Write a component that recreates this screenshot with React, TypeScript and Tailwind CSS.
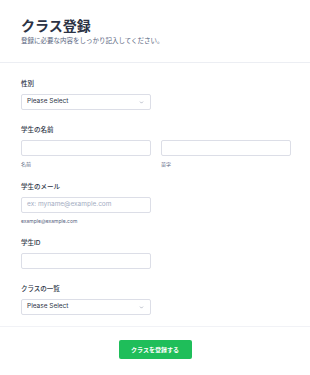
import { ChevronDown } from "lucide-react";

const font = { fontFamily: 'Inter, "Noto Sans CJK JP", sans-serif' };

function Label({ children }: { children: React.ReactNode }) {
  return (
    <div className="h-[10px] mb-[5px] text-[6.5px] leading-[10px] font-medium text-[#2c3345]">{children}</div>
  );
}

function Select() {
  return (
    <div className="w-[130px] h-[16px] border border-[#dcdee7] rounded-[2px] bg-white flex items-center justify-between pl-[5px] pr-[6px]">
      <span className="text-[6.5px] text-[#2c3345]">Please Select</span>
      <ChevronDown className="w-[5px] h-[5px] text-[#7d879c]" strokeWidth={2.5} />
    </div>
  );
}

function Input({ placeholder, wide }: { placeholder?: string; wide?: boolean }) {
  return (
    <div
      className={
        (wide ? "flex-1" : "w-[130px]") +
        " h-[16px] border border-[#dcdee7] rounded-[2px] bg-white flex items-center px-[5px]"
      }
    >
      {placeholder && <span className="text-[6.5px] text-[#a3acc2]">{placeholder}</span>}
    </div>
  );
}

function Sub({ children }: { children: React.ReactNode }) {
  return <div className="mt-[4px] h-[8px] text-[5px] leading-[8px] text-[#57647e]">{children}</div>;
}

export default function App() {
  return (
    <div className="w-[310px] h-[375px] bg-white overflow-hidden" style={font}>
      <div className="px-[21px] pt-[16px] pb-[16px] border-b border-[#eceef3]">
        <h1 className="text-[14px] leading-[20px] font-bold text-[#2c3345]">クラス登録</h1>
        <p className="mt-[1px] text-[6.5px] leading-[9px] text-[#57647e]">登録に必要な内容をしっかり記入してください。</p>
      </div>

      <div className="pr-[19px] pl-[21px] pt-[16px] pb-[11px] border-b border-[#f1f2f6] flex flex-col">
        <div>
          <Label>性別</Label>
          <Select />
        </div>

        <div className="mt-[15px]">
          <Label>学生の名前</Label>
          <div className="flex gap-[10px]">
            <div className="w-[130px]">
              <Input />
              <Sub>名前</Sub>
            </div>
            <div className="flex-1">
              <Input wide />
              <Sub>苗字</Sub>
            </div>
          </div>
        </div>

        <div className="mt-[14px]">
          <Label>学生のメール</Label>
          <Input placeholder="ex: myname@example.com" />
          <Sub>example@example.com</Sub>
        </div>

        <div className="mt-[13px]">
          <Label>学生ID</Label>
          <Input />
        </div>

        <div className="mt-[15px]">
          <Label>クラスの一覧</Label>
          <Select />
        </div>
      </div>

      <div className="flex justify-center pt-[13px]">
        <button className="w-[73px] h-[19px] rounded-[2px] bg-[#1fbe5a] text-white text-[6px] font-bold">
          クラスを登録する
        </button>
      </div>
    </div>
  );
}
